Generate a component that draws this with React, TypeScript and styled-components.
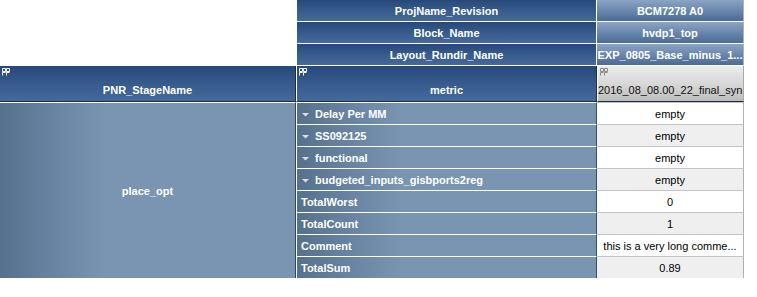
import styled, { createGlobalStyle } from 'styled-components';

const GlobalStyle = createGlobalStyle({
  'html, body': {
    margin: 0,
    padding: 0,
    background: '#ffffff',
  },
  body: {
    fontFamily: '"Liberation Sans", Arial, sans-serif',
    fontSize: '11px',
  },
});

const headBlue = 'linear-gradient(to bottom, #27497a 0%, #34598a 45%, #44699a 100%)';
const rowBlue = 'linear-gradient(to right, #56718d 0px, #6783a1 50px, #7a95b2 105px, #7a95b2 100%)';

const Sheet = styled.div({
  display: 'grid',
  gridTemplateColumns: '296px 301px 147px',
  gridTemplateRows: 'repeat(3, 22px) 36px repeat(8, 22px)',
  width: '744px',
  color: '#ffffff',
  fontWeight: 'bold',
  fontSize: '11px',
});

const Blank = styled.div({
  gridRow: 'span 3',
  background: '#ffffff',
});

const Cell = styled.div({
  boxSizing: 'border-box',
  display: 'flex',
  alignItems: 'center',
  overflow: 'hidden',
  whiteSpace: 'nowrap',
  minWidth: 0,
});

const MetaKey = styled(Cell)({
  justifyContent: 'center',
  background: headBlue,
  borderLeft: '1px solid #ffffff',
  borderRight: '1px solid #ffffff',
  borderBottom: '1px solid #ffffff',
});

const MetaValue = styled(Cell)({
  justifyContent: 'center',
  background: 'linear-gradient(to bottom, #8ba4c4 0%, #6d8ab0 45%, #4b6b95 100%)',
  borderRight: '1px solid #a9b3c0',
  borderBottom: '1px solid #ffffff',
});

const ColumnHead = styled(Cell)<{ $run?: boolean; $edge?: boolean }>((p) => ({
  position: 'relative',
  flexDirection: 'column',
  justifyContent: 'flex-end',
  alignItems: p.$run ? 'flex-start' : 'center',
  paddingBottom: '4px',
  background: p.$run
    ? 'linear-gradient(to bottom, #ececec 0%, #d6d6d6 55%, #bdbdbd 100%)'
    : headBlue,
  color: p.$run ? '#111111' : '#ffffff',
  fontWeight: p.$run ? 'normal' : 'bold',
  fontSize: '11px',
  borderLeft: p.$edge ? 'none' : '1px solid #ffffff',
  borderRight: p.$run ? '1px solid #a9a9a9' : '1px solid #1b2c48',
  borderBottom: '1px solid #1b2c48',
  lineHeight: '14px',
}));

const GridMark = styled.svg({
  position: 'absolute',
  top: '2px',
  left: '2px',
});

const GroupCell = styled(Cell)({
  gridRow: 'span 8',
  justifyContent: 'center',
  background: rowBlue,
  borderTop: '1px solid #ffffff',
  borderRight: '1px solid #2e4564',
});

const MetricCell = styled(Cell)({
  gap: '5px',
  paddingLeft: '4px',
  background: rowBlue,
  borderTop: '1px solid #ffffff',
  borderLeft: '1px solid #ffffff',
  borderRight: '1px solid #34506f',
});

const ValueCell = styled(Cell)<{ $alt?: boolean }>((p) => ({
  justifyContent: 'center',
  background: p.$alt ? '#efefef' : '#ffffff',
  color: '#000000',
  fontWeight: 'normal',
  borderTop: '1px solid #c4c4c4',
  borderRight: '1px solid #b0b0b0',
}));

const Toggle = () => (
  <svg width='9' height='6' viewBox='0 0 9 6'>
    <rect x='0' y='0' width='9' height='1' fill='#5b6f86' />
    <polygon points='1,2 8,2 4.5,5.5' fill='#d9dde3' />
  </svg>
);

// column drag handle: two closed squares over two open ones
const Mark = ({ dim }: { dim?: boolean }) => (
  <GridMark width='8' height='8' viewBox='0 0 8 8'>
    <path
      d='M0.5 0.5h3v3h-3z M4.5 0.5h3v3h-3z M0.5 7.5V4.5h3 M4.5 7.5V4.5h3'
      fill='none'
      stroke={dim ? '#8a8a8a' : '#ffffff'}
    />
  </GridMark>
);

const meta = [
  ['ProjName_Revision', 'BCM7278 A0'],
  ['Block_Name', 'hvdp1_top'],
  ['Layout_Rundir_Name', 'EXP_0805_Base_minus_1...'],
];

const rows: { name: string; value: string; nested?: boolean }[] = [
  { name: 'Delay Per MM', value: 'empty', nested: true },
  { name: 'SS092125', value: 'empty', nested: true },
  { name: 'functional', value: 'empty', nested: true },
  { name: 'budgeted_inputs_gisbports2reg', value: 'empty', nested: true },
  { name: 'TotalWorst', value: '0' },
  { name: 'TotalCount', value: '1' },
  { name: 'Comment', value: 'this is a very long comme...' },
  { name: 'TotalSum', value: '0.89' },
];

export default function App() {
  return (
    <>
      <GlobalStyle />
      <Sheet>
        <Blank />
        {meta.map(([key, value]) => [
          <MetaKey key={key}>{key}</MetaKey>,
          <MetaValue key={`${key}-v`}>{value}</MetaValue>,
        ])}

        <ColumnHead $edge>
          <Mark />
          PNR_StageName
        </ColumnHead>
        <ColumnHead>
          <Mark />
          metric
        </ColumnHead>
        <ColumnHead $run>
          <Mark dim />
          2016_08_08.00_22_final_syn
        </ColumnHead>

        <GroupCell>place_opt</GroupCell>
        {rows.map((row, i) => [
          <MetricCell key={row.name}>
            {row.nested && <Toggle />}
            {row.name}
          </MetricCell>,
          <ValueCell key={`${row.name}-v`} $alt={i % 2 === 1}>
            {row.value}
          </ValueCell>,
        ])}
      </Sheet>
    </>
  );
}
